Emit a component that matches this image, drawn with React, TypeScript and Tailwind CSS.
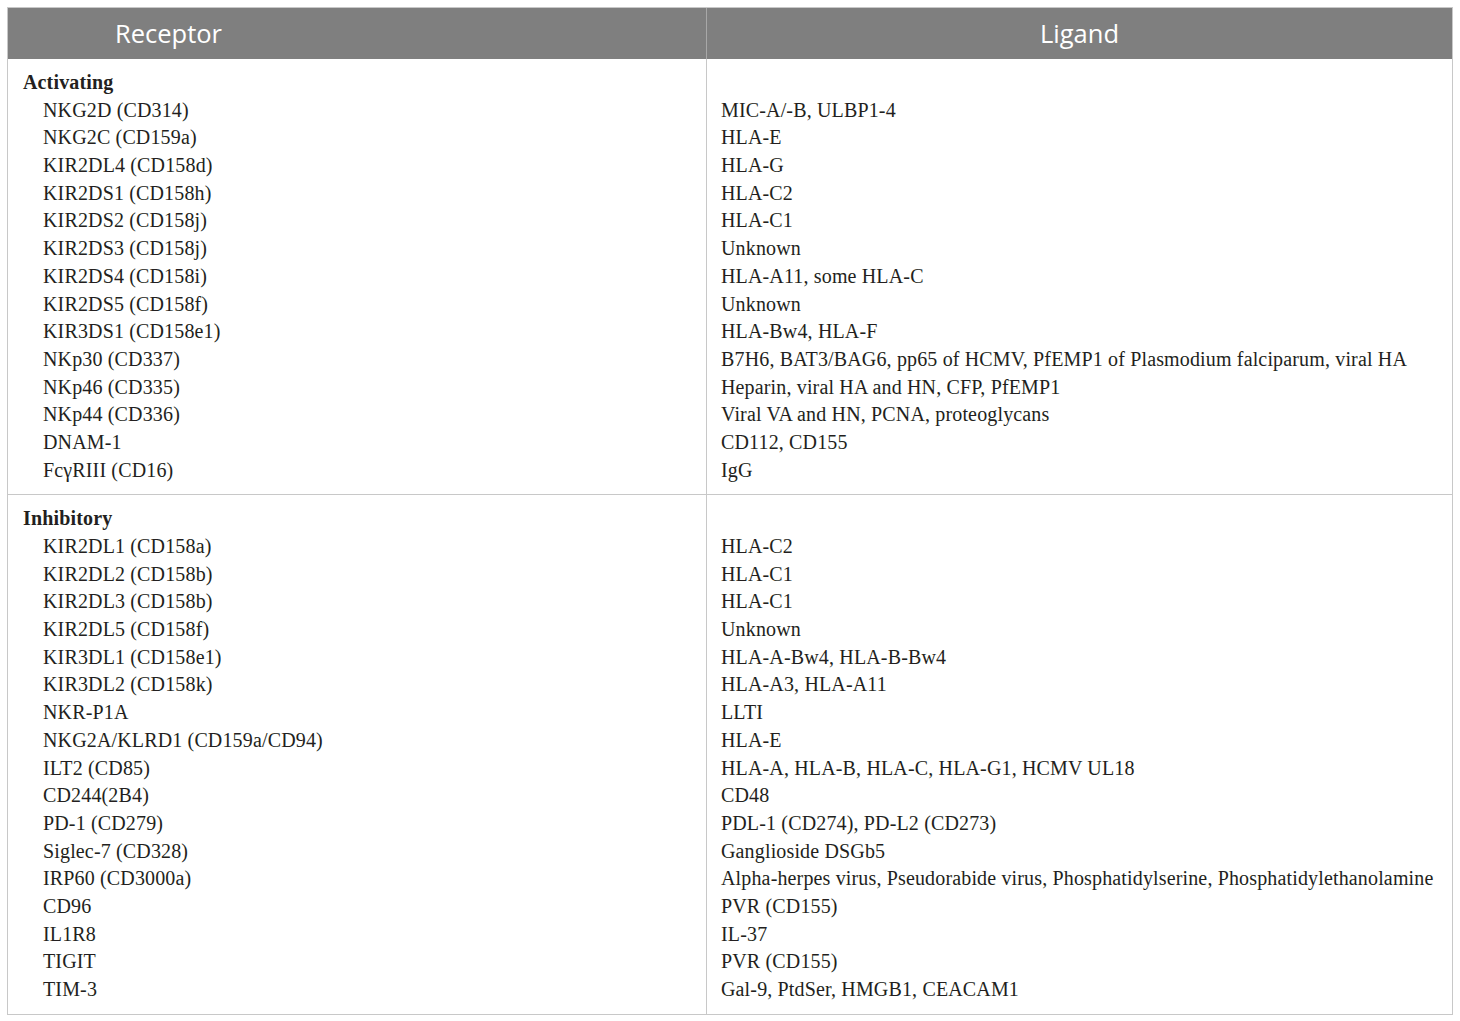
import React from "react";

const activating: [string, string][] = [
  ["NKG2D (CD314)", "MIC-A/-B, ULBP1-4"],
  ["NKG2C (CD159a)", "HLA-E"],
  ["KIR2DL4 (CD158d)", "HLA-G"],
  ["KIR2DS1 (CD158h)", "HLA-C2"],
  ["KIR2DS2 (CD158j)", "HLA-C1"],
  ["KIR2DS3 (CD158j)", "Unknown"],
  ["KIR2DS4 (CD158i)", "HLA-A11, some HLA-C"],
  ["KIR2DS5 (CD158f)", "Unknown"],
  ["KIR3DS1 (CD158e1)", "HLA-Bw4, HLA-F"],
  ["NKp30 (CD337)", "B7H6, BAT3/BAG6, pp65 of HCMV, PfEMP1 of Plasmodium falciparum, viral HA"],
  ["NKp46 (CD335)", "Heparin, viral HA and HN, CFP, PfEMP1"],
  ["NKp44 (CD336)", "Viral VA and HN, PCNA, proteoglycans"],
  ["DNAM-1", "CD112, CD155"],
  ["FcγRIII (CD16)", "IgG"],
];

const inhibitory: [string, string][] = [
  ["KIR2DL1 (CD158a)", "HLA-C2"],
  ["KIR2DL2 (CD158b)", "HLA-C1"],
  ["KIR2DL3 (CD158b)", "HLA-C1"],
  ["KIR2DL5 (CD158f)", "Unknown"],
  ["KIR3DL1 (CD158e1)", "HLA-A-Bw4, HLA-B-Bw4"],
  ["KIR3DL2 (CD158k)", "HLA-A3, HLA-A11"],
  ["NKR-P1A", "LLTI"],
  ["NKG2A/KLRD1 (CD159a/CD94)", "HLA-E"],
  ["ILT2 (CD85)", "HLA-A, HLA-B, HLA-C, HLA-G1, HCMV UL18"],
  ["CD244(2B4)", "CD48"],
  ["PD-1 (CD279)", "PDL-1 (CD274), PD-L2 (CD273)"],
  ["Siglec-7 (CD328)", "Ganglioside DSGb5"],
  ["IRP60 (CD3000a)", "Alpha-herpes virus, Pseudorabide virus, Phosphatidylserine, Phosphatidylethanolamine"],
  ["CD96", "PVR (CD155)"],
  ["IL1R8", "IL-37"],
  ["TIGIT", "PVR (CD155)"],
  ["TIM-3", "Gal-9, PtdSer, HMGB1, CEACAM1"],
];

function Section({ title, rows, last }: { title: string; rows: [string, string][]; last?: boolean }) {
  return (
    <div className={`grid grid-cols-[699px_1fr] ${last ? "" : "border-b border-[#c8c8c8]"}`}>
      <div className="border-r border-[#c8c8c8] py-[10px] pl-[15px]">
        <div className="h-[27.7px] leading-[27.7px] font-bold">{title}</div>
        {rows.map(([r]) => (
          <div key={r} className="h-[27.7px] leading-[27.7px] pl-[20px] whitespace-nowrap">
            {r}
          </div>
        ))}
      </div>
      <div className="py-[10px] pl-[14px]">
        <div className="h-[27.7px]" />
        {rows.map(([r, l]) => (
          <div key={r} className="h-[27.7px] leading-[27.7px] whitespace-nowrap">
            {l}
          </div>
        ))}
      </div>
    </div>
  );
}

export default function App() {
  return (
    <div className="w-[1460px] h-[1021px] bg-white pt-[7px] pl-[7px]">
      <div
        className="w-[1446px] border border-[#c8c8c8] text-[#231f20] text-[20px] tracking-[0.15px]"
        style={{ fontFamily: '"Liberation Serif", "Times New Roman", serif' }}
      >
        <div
          className="grid grid-cols-[699px_1fr] h-[51px] bg-[#7f7f7f] text-white text-[25.5px] tracking-normal"
          style={{ fontFamily: '"Open Sans", "Noto Sans", sans-serif' }}
        >
          <div className="border-r border-[#a8a8a8] flex items-center pl-[107px]">Receptor</div>
          <div className="flex items-center justify-center">Ligand</div>
        </div>
        <Section title="Activating" rows={activating} />
        <Section title="Inhibitory" rows={inhibitory} last />
      </div>
    </div>
  );
}
